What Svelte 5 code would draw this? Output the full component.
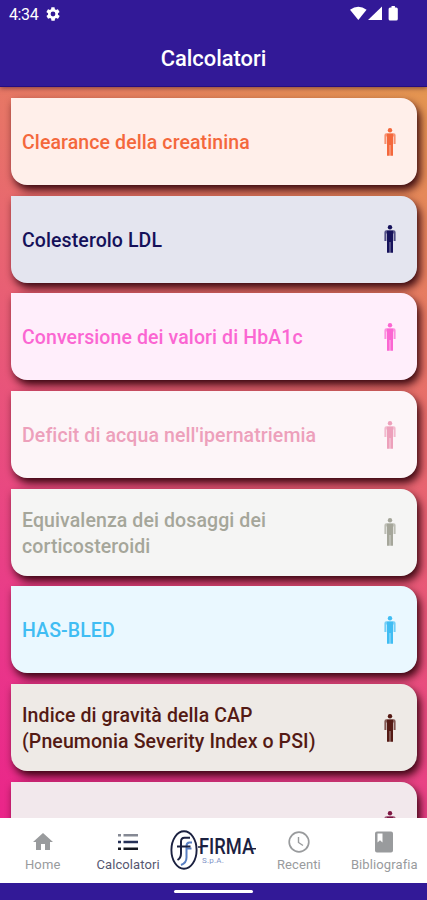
<script>
  const calculators = [
    { title: 'Clearance della creatinina', color: '#f4683c', bg: '#ffefea' },
    { title: 'Colesterolo LDL', color: '#15115a', bg: '#e4e5ef' },
    { title: 'Conversione dei valori di HbA1c', color: '#fb66d2', bg: '#ffeefb' },
    { title: "Deficit di acqua nell'ipernatriemia", color: '#eda0bb', bg: '#fdf5f8' },
    { title: 'Equivalenza dei dosaggi dei corticosteroidi', color: '#a5a69a', bg: '#f5f5f4' },
    { title: 'HAS-BLED', color: '#40bdf3', bg: '#eaf8ff' },
    { title: 'Indice di gravità della CAP (Pneumonia Severity Index o PSI)', color: '#541a14', bg: '#eeeae6' },
    { title: '', color: '#7d1743', bg: '#f2e8ec' },
  ];
</script>

<div class="app">
  <header>
    <div class="status">
      <span class="time">4:34</span>
      <svg class="gear" viewBox="0 0 24 24">
        <path fill="#fff" fill-rule="evenodd" d="M19.4 13a7.5 7.5 0 0 0 0-2l2.1-1.7c.2-.1.3-.4.1-.6l-2-3.5c-.1-.2-.4-.3-.6-.2l-2.5 1a7 7 0 0 0-1.7-1L14.4 2.4A.5.5 0 0 0 14 2h-4c-.2 0-.5.2-.5.4L9.1 5a7 7 0 0 0-1.7 1l-2.5-1c-.2-.1-.5 0-.6.2l-2 3.5c-.1.2-.1.5.1.6L4.600 11a7.500 7.500 0 0 0 0 2l-2.100 1.700c-.2.100-.3.400-.1.600l2 3.500c.1.200.4.300.6.200l2.500-1a7 7 0 0 0 1.700 1l.4 2.600c0 .2.200.4.500.4h4c.2 0 .5-.2.500-.4l.4-2.600a7 7 0 0 0 1.700-1l2.500 1c.2.100.5 0 .6-.2l2-3.500c.1-.2.1-.5-.1-.6zM12 15.600a3.600 3.600 0 1 1 0-7.200 3.600 3.600 0 0 1 0 7.200z" />
      </svg>
      <svg class="signals" viewBox="0 0 50 16">
        <path fill="#fff" d="M0 3.700Q8.300-2.300 16.600 3.700L8.300 14z" />
        <path fill="#fff" d="M32 .6V14H18z" />
        <path fill="#fff" d="M41.500 0h3.400v1.500h1.300q1.600 0 1.600 1.600v9.800q0 1.600-1.600 1.600h-6q-1.600 0-1.600-1.600V3.100q0-1.600 1.600-1.600h1.300z" />
      </svg>
    </div>
    <h1>Calcolatori</h1>
  </header>

  <main>
    {#each calculators as item}
      <article style="color: {item.color}; background: {item.bg}">
        <h2>{item.title}</h2>
        <svg class="person" viewBox="0 0 14 30">
          <circle cx="7" cy="3.200" r="2.200" fill="currentColor" />
          <path fill="currentColor" opacity="0.7" d="M3.400 6.300h7.200q2 0 2 2v8.600h-2V9.600H3.400v7.300h-2V8.300q0-2 2-2z" />
          <path fill="currentColor" d="M4 6.800h6v22H7.300V18h-.6v10.800H4z" />
        </svg>
      </article>
    {/each}
  </main>

  <nav>
    <div class="tab">
      <svg viewBox="0 0 24 24"><path fill="currentColor" d="M10 20v-6h4v6h5v-8h3L12 3 2 12h3v8z" /></svg>
      <span>Home</span>
    </div>
    <div class="tab active">
      <svg viewBox="0 0 24 24">
        <path fill="#858994" d="M2 4h3v2.500H2zM7.500 4H22v2.500H7.500z" />
        <path fill="#263158" d="M2 10.700h3v2.500H2zM7.500 10.700H22v2.500H7.500z" />
        <path fill="#161821" d="M2 17.500h3V20H2zM7.500 17.500H22V20H7.500z" />
      </svg>
      <span>Calcolatori</span>
    </div>
    <div class="brand">
      <svg class="emblem" viewBox="0 0 28 40">
        <ellipse cx="14" cy="20" rx="12.600" ry="18.800" fill="none" stroke="#1b2140" stroke-width="1.900" />
        <path d="M22 12.500h-2.500q-3 0-3 3.500v11.500q0 5.500-5.500 7.500M16.500 18.500h5" fill="none" stroke="#587fc3" stroke-width="2" />
        <path d="M20 7.800h-5.500q-3.500 0-3.500 3.700v12q0 4.500-3.500 6.500M7 16.500h13.500" fill="none" stroke="#1b2140" stroke-width="2" />
      </svg>
      <div class="words">
        <svg class="name" viewBox="0 0 58 18">
          <text x="1" y="17" textLength="55" lengthAdjust="spacingAndGlyphs">FIRMA</text>
          <path d="M0 10h4M52 11.700h6" stroke="#1b2140" stroke-width="1.600" />
        </svg>
        <span class="spa">S.p.A.</span>
      </div>
    </div>
    <div class="tab">
      <svg viewBox="0 0 24 24">
        <circle cx="12" cy="12" r="9.800" fill="none" stroke="currentColor" stroke-width="1.700" />
        <path d="M11.500 7v5.500l4.500 3" fill="none" stroke="currentColor" stroke-width="1.400" />
      </svg>
      <span>Recenti</span>
    </div>
    <div class="tab">
      <svg viewBox="0 0 24 24"><path fill="currentColor" fill-rule="evenodd" d="M5 1.500h14q2 0 2 2v17q0 2-2 2H5q-2 0-2-2v-17q0-2 2-2zM5.500 3.500v9l2.500-2.300 2.500 2.300v-9z" /></svg>
      <span>Bibliografia</span>
    </div>
  </nav>

  <footer><div class="handle"></div></footer>
</div>

<style>
  :global(body) {
    margin: 0;
  }
  .app {
    display: flex;
    flex-direction: column;
    width: 427px;
    height: 900px;
    overflow: hidden;
    font-family: Roboto, sans-serif;
  }
  header {
    height: 87px;
    flex: none;
    background: #321997;
    border-bottom: 1px solid #260c80;
    box-sizing: border-box;
    color: #fff;
    box-shadow: 0 1px 5px rgba(60, 20, 40, 0.6);
    z-index: 1;
  }
  .status {
    display: flex;
    height: 28px;
    align-items: center;
    padding: 0 27px 0 9px;
  }
  .time {
    font-size: 16px;
    letter-spacing: -0.4px;
    width: 36px;
  }
  .gear {
    width: 16px;
    height: 16px;
  }
  .signals {
    width: 50px;
    height: 16px;
    margin-left: auto;
  }
  h1 {
    margin: 17px 0 0;
    text-align: center;
    font-size: 21.9px;
    line-height: 28px;
    font-weight: 500;
  }
  main {
    flex: 1;
    min-height: 0;
    overflow: hidden;
    display: flex;
    flex-direction: column;
    gap: 10.7px;
    padding: 11px 10px 0 11px;
    background: linear-gradient(30deg, #ea2589 0%, #e9398a 20%, #e8686f 62%, #e49650 100%);
  }
  article {
    flex: none;
    box-sizing: border-box;
    height: 87px;
    display: flex;
    align-items: center;
    justify-content: space-between;
    padding: 3px 20px 0 11px;
    border-radius: 0 16px 16px 16px;
    box-shadow: 3px 5px 8px rgba(45, 0, 10, 0.95);
  }
  h2 {
    margin: 0;
    width: 310px;
    font-size: 19.5px;
    line-height: 26px;
    font-weight: 500;
    letter-spacing: 0.1px;
  }
  .person {
    width: 14px;
    height: 30px;
    margin-bottom: 3px;
  }
  nav {
    flex: none;
    height: 65px;
    display: grid;
    grid-template-columns: repeat(5, minmax(0, 1fr));
    background: #fff;
    z-index: 1;
  }
  .tab {
    display: flex;
    flex-direction: column;
    align-items: center;
    padding-top: 12px;
    color: #999b9d;
    font-size: 13px;
    line-height: 16px;
  }
  .tab svg {
    width: 24px;
    height: 24px;
    margin-bottom: 3px;
  }
  .tab span {
    letter-spacing: 0.1px;
  }
  .active {
    color: #565770;
  }
  .brand {
    display: flex;
    justify-content: center;
    padding: 12px 1px 0 0;
  }
  .emblem {
    flex: none;
    width: 28px;
    height: 40px;
  }
  .words {
    display: flex;
    flex-direction: column;
    width: 58px;
    flex: none;
    padding-top: 7px;
  }
  .name {
    width: 58px;
    height: 18px;
    overflow: visible;
  }
  .name text {
    font-family: Roboto, sans-serif;
    font-size: 22px;
    font-weight: 500;
    fill: #1b2140;
  }
  .spa {
    margin: 1px 0 0 4px;
    font-size: 8px;
    line-height: 9px;
    letter-spacing: 0.2px;
    color: #8194c7;
  }
  footer {
    flex: none;
    height: 17px;
    display: flex;
    justify-content: center;
    align-items: center;
    background: #321997;
  }
  .handle {
    width: 79px;
    height: 3px;
    border-radius: 2px;
    background: #fff;
  }
</style>
